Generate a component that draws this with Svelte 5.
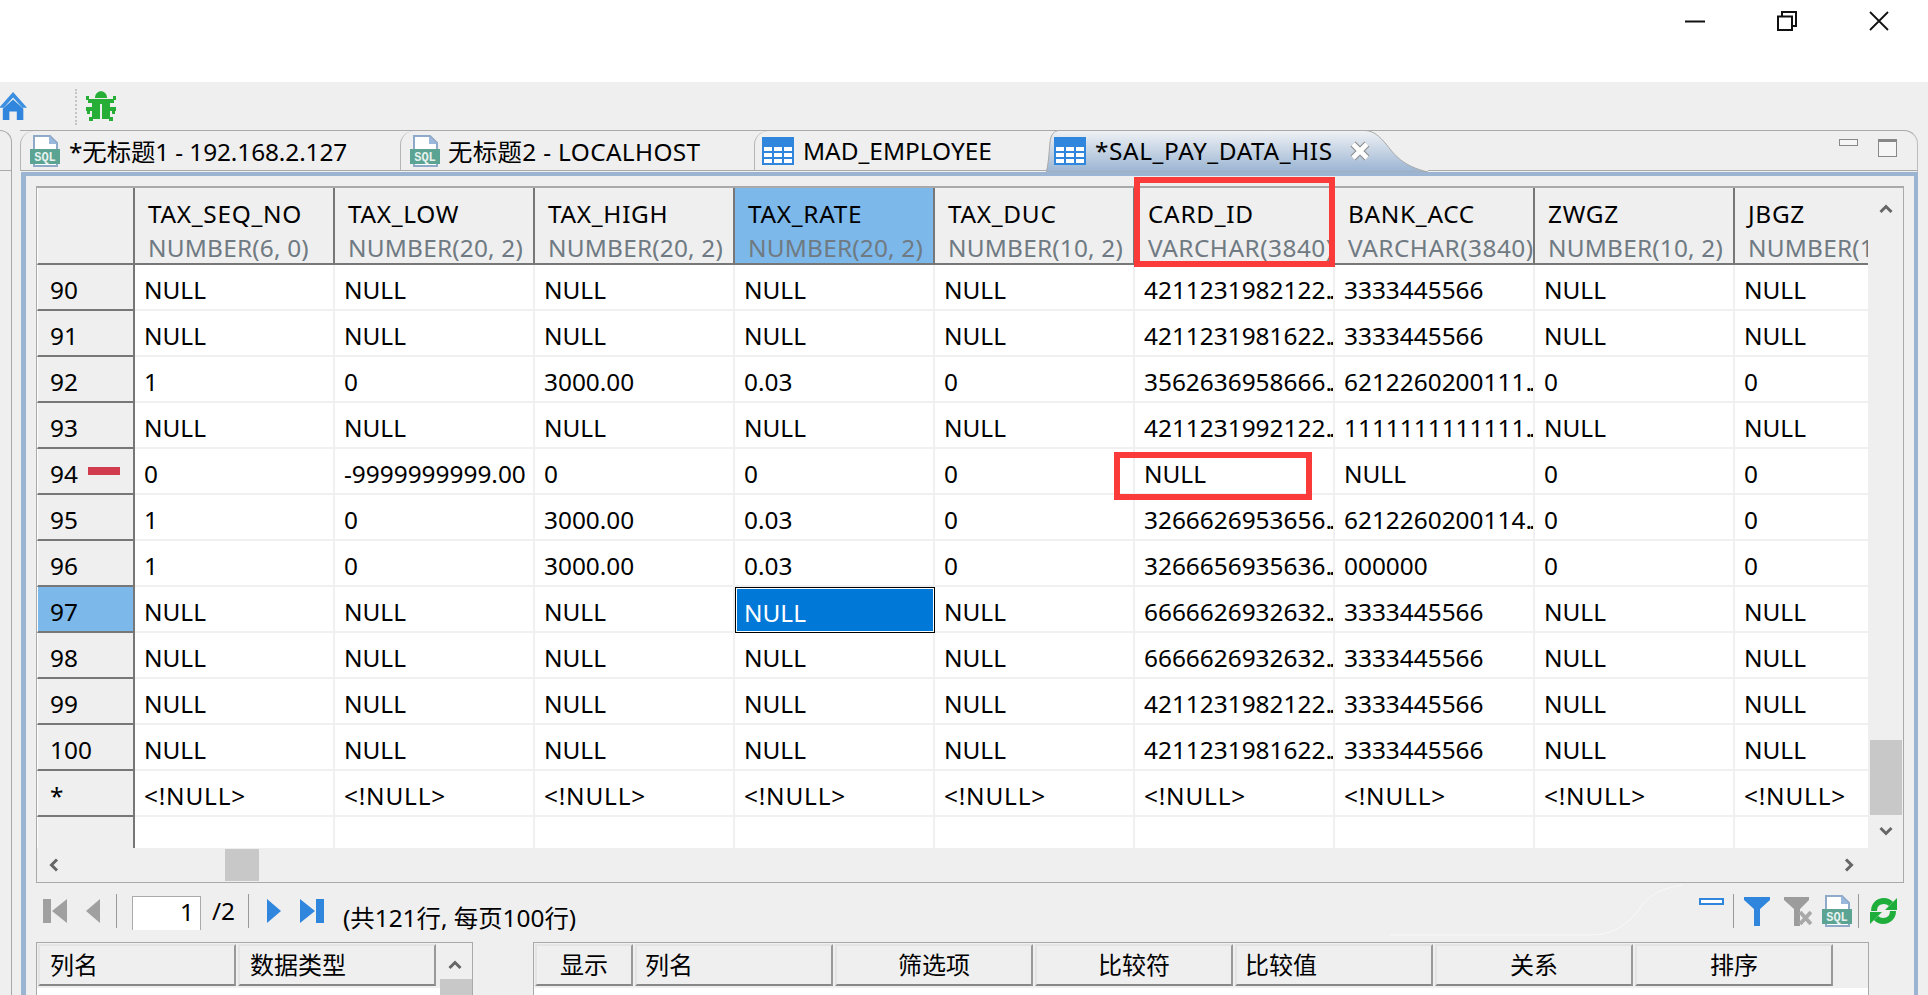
<script>
  const cols = [
    ['TAX_SEQ_NO', 'NUMBER(6, 0)'], ['TAX_LOW', 'NUMBER(20, 2)'], ['TAX_HIGH', 'NUMBER(20, 2)'],
    ['TAX_RATE', 'NUMBER(20, 2)'], ['TAX_DUC', 'NUMBER(10, 2)'], ['CARD_ID', 'VARCHAR(3840)'],
    ['BANK_ACC', 'VARCHAR(3840)'], ['ZWGZ', 'NUMBER(10, 2)'], ['JBGZ', 'NUMBER(10, 2)']
  ];
  const n = (c, b) => ['NULL', 'NULL', 'NULL', 'NULL', 'NULL', c, b, 'NULL', 'NULL'];
  const q = '3333445566';
  const rows = [
    ['90', n('4211231982122..', q)],
    ['91', n('4211231981622..', q)],
    ['92', ['1', '0', '3000.00', '0.03', '0', '3562636958666..', '6212260200111..', '0', '0']],
    ['93', n('4211231992122..', '1111111111111..')],
    ['94', ['0', '-9999999999.00', '0', '0', '0', 'NULL', 'NULL', '0', '0']],
    ['95', ['1', '0', '3000.00', '0.03', '0', '3266626953656..', '6212260200114..', '0', '0']],
    ['96', ['1', '0', '3000.00', '0.03', '0', '3266656935636..', '000000', '0', '0']],
    ['97', n('6666626932632..', q)],
    ['98', n('6666626932632..', q)],
    ['99', n('4211231982122..', q)],
    ['100', n('4211231981622..', q)],
    ['*', Array(9).fill('<!NULL>')],
    ['', Array(9).fill('')]
  ];
</script>

{#snippet sqlIcon()}
  <svg class="ic30" viewBox="0 0 30 32">
    <path d="M4 1H20L27 8V31H4Z" fill="#fff" stroke="#8fa9c9" stroke-width="2"/>
    <path d="M19 1L27 9H19Z" fill="#9ab7dc"/>
    <rect x="0" y="14" width="30" height="15" fill="#5ba392"/>
    <text x="15" y="26" text-anchor="middle" class="sqltxt">SQL</text>
  </svg>
{/snippet}

{#snippet tableIcon()}
  <svg class="ic32" viewBox="0 0 32 28">
    <rect width="32" height="28" fill="#2f86dc"/>
    <g fill="#fff">
      {#each [10, 16, 22] as y}
        {#each [2, 12, 22] as x}
          <rect {x} {y} width="8" height="4"/>
        {/each}
      {/each}
    </g>
  </svg>
{/snippet}

<div class="app">
  <header class="title">
    <svg class="wc" viewBox="0 0 20 20"><path d="M0 10.5H20" stroke="#111" stroke-width="2"/></svg>
    <svg class="wc" viewBox="0 0 20 20"><path d="M1 5.5H15V19H1ZM5 5V1H19V15H15" fill="none" stroke="#111" stroke-width="2"/></svg>
    <svg class="wc" viewBox="0 0 20 20"><path d="M1 1L19 19M19 1L1 19" stroke="#111" stroke-width="1.8"/></svg>
  </header>

  <div class="toolbar">
    <svg class="home" viewBox="0 0 30 30">
      <path d="M14 0L29 17H24L14 6L4 17H-1Z" fill="#3a8fe0"/>
      <path d="M3 18L14 8L25 18V30H18V21H10V30H3Z" fill="#2f86dc"/>
    </svg>
    <span class="dotsep"></span>
    <svg class="bug" viewBox="0 0 30 32">
      <g fill="#27ae36">
        <path d="M9 8C9 -1 21 -1 21 8Z"/>
        <path d="M6 9H14V29H6ZM16 9H24V29H16Z"/>
        <path d="M6 9H24V14H6Z"/>
        <path d="M0 6H3V9H7V13H2V10H0ZM30 6H27V9H23V13H28V10H30ZM0 17H7V21H4V24H1V21H0ZM30 17H23V21H26V24H29V21H30ZM7 24V27H3V31H7V29H10V24ZM23 24V27H27V31H23V29H20V24Z"/>
      </g>
    </svg>
  </div>

  <div class="work">
    <div class="stub"></div>
    <section class="editor">
      <div class="tabs">
        <div class="tab t1">{@render sqlIcon()}<span class="ls1">*无标题1 - 192.168.2.127</span></div>
        <div class="tab t2">{@render sqlIcon()}<span class="ls4">无标题2 - LOCALHOST</span></div>
        <div class="tab t3">{@render tableIcon()}<span>MAD_EMPLOYEE</span></div>
        <div class="tab t4">
          <svg class="tabshape" viewBox="0 0 382 42" preserveAspectRatio="none">
            <defs>
              <linearGradient id="tabgrad" x1="0" y1="0" x2="0" y2="1">
                <stop offset="0" stop-color="#f0f2f5"/>
                <stop offset="1" stop-color="#9ab4d2"/>
              </linearGradient>
            </defs>
            <path d="M0 42C2 38 3 24 4 12C5 4 8 1 13 0.5H319C328 1 333 6 340 14C348 24 356 36 382 42Z" fill="url(#tabgrad)" stroke="#a9a9a9"/>
          </svg>
          {@render tableIcon()}<span class="lbl">*SAL_PAY_DATA_HIS</span>
          <svg class="x" viewBox="0 0 20 20"><path d="M3 3L17 17M17 3L3 17" stroke="#8f8f8f" stroke-width="7"/><path d="M3 3L17 17M17 3L3 17" stroke="#fff" stroke-width="4.6"/></svg>
        </div>
        <div class="winbtns">
          <span class="pmin"></span>
          <span class="pmax"></span>
        </div>
      </div>

      <div class="body">
        <div class="grid">
          <div class="sheet">
            <div class="row head">
              <div class="rh corner"></div>
              {#each cols as c, i}
                <div class="hc" class:sel={i === 3}>
                  <div class="cn">{c[0]}</div>
                  <div class="ct" class:wide={c[1].startsWith('VARCHAR')}>{c[1]}</div>
                </div>
              {/each}
            </div>
            {#each rows as r, ri}
              <div class="row" class:tail={ri === rows.length - 1}>
                <div class="rh" class:sel={r[0] === '97'}>
                  <span>{r[0]}</span>
                  {#if r[0] === '94'}<i class="del"></i>{/if}
                </div>
                {#each r[1] as v, i}
                  <div class="c" class:cur={r[0] === '97' && i === 3} class:nn={v === '<!NULL>'}>
                    {#if v.endsWith('..')}<span>{v.slice(0, -2)}<span class="dots">..</span></span>{:else}{v}{/if}
                  </div>
                {/each}
              </div>
            {/each}
          </div>
          <div class="vbar">
            <svg class="arr" viewBox="0 0 14 10"><path d="M1.5 8L7 2.5L12.5 8" fill="none" stroke="#666" stroke-width="3"/></svg>
            <div class="vtrack"><div class="vthumb"></div></div>
            <svg class="arr" viewBox="0 0 14 10"><path d="M1.5 2L7 7.5L12.5 2" fill="none" stroke="#666" stroke-width="3"/></svg>
          </div>
          <div class="hbar">
            <svg class="arrh" viewBox="0 0 10 14"><path d="M8 1.5L2.5 7L8 12.5" fill="none" stroke="#666" stroke-width="3"/></svg>
            <div class="hthumb"></div>
            <svg class="arrh end" viewBox="0 0 10 14"><path d="M2 1.5L7.5 7L2 12.5" fill="none" stroke="#666" stroke-width="3"/></svg>
          </div>
        </div>

        <div class="pager">
          <svg class="pg first" viewBox="0 0 24 24"><path d="M0 0H8V24H0ZM24 0V24L9 12Z" fill="#a0a0a0"/></svg>
          <svg class="pg prev" viewBox="0 0 14 24"><path d="M14 0V24L0 12Z" fill="#a0a0a0"/></svg>
          <span class="vsep s1"></span>
          <div class="pinput">1</div>
          <span class="ptotal">/2</span>
          <span class="vsep s2"></span>
          <svg class="pg next" viewBox="0 0 14 24"><path d="M0 0V24L14 12Z" fill="#2f86dc"/></svg>
          <svg class="pg plast" viewBox="0 0 24 24"><path d="M0 0L15 12L0 24ZM16 0H24V24H16Z" fill="#2f86dc"/></svg>
          <span class="pinfo">(共121行, 每页100行)</span>
          <div class="ptools">
            <span class="restore"></span>
            <span class="vsep s3"></span>
            <svg class="funnel" viewBox="0 0 26 29"><path d="M0 0H26V3L16 12V29H10V12L0 3Z" fill="#2f86dc"/></svg>
            <svg class="funnel2" viewBox="0 0 28 29"><path d="M0 0H25V3L16 12V29H10V12L0 3Z" fill="#9c9c9c"/><path d="M16 15L27 27M27 15L16 27" stroke="#a9a9a9" stroke-width="4"/></svg>
            {@render sqlIcon()}
            <span class="vsep s4"></span>
            <svg class="refresh" viewBox="0 0 27 28">
              <g fill="none" stroke="#1fae3c" stroke-width="6">
                <path d="M4 14C4 8 8 4 14 4C17 4 19 5 21 7"/>
                <path d="M23 14C23 20 19 24 13 24C10 24 8 23 6 21"/>
              </g>
              <path d="M27 1V13H15Z" fill="#1fae3c"/>
              <path d="M0 27V15H12Z" fill="#1fae3c"/>
            </svg>
          </div>
        </div>

        <div class="lower">
          <div class="ltable">
            <div class="lhead">
              <div class="lh w198">列名</div>
              <div class="lh w198">数据类型</div>
              <div class="lscroll">
                <svg class="arr" viewBox="0 0 14 10"><path d="M1.5 8L7 2.5L12.5 8" fill="none" stroke="#666" stroke-width="3"/></svg>
                <div class="lthumb"></div>
              </div>
            </div>
          </div>
          <div class="rtable">
            <div class="lhead">
              <div class="lh w98 mid">显示</div>
              <div class="lh w198 lft">列名</div>
              <div class="lh w198 mid">筛选项</div>
              <div class="lh w198 mid">比较符</div>
              <div class="lh w198 lft">比较值</div>
              <div class="lh w198 mid">关系</div>
              <div class="lh w198 mid">排序</div>
            </div>
          </div>
        </div>
      </div>
    </section>
  </div>

  <svg class="curve" viewBox="0 0 400 60">
    <path d="M100 51H300C320 51 330 44 340 36C352 26 352 8 392 1" fill="none" stroke="#f9f9f9" stroke-width="1"/>
  </svg>
  <div class="mark m1"></div>
  <div class="mark m2"></div>
</div>

<style>
  :global(body) { margin: 0; background: #fff; }
  .app {
    position: relative;
    width: 1928px;
    height: 995px;
    overflow: hidden;
    background: #efefef;
    color: #000;
    font-family: "Noto Sans", "Noto Sans CJK SC", sans-serif;
    font-size: 24.4px;
  }
  svg { display: block; flex: none; }
  .title {
    height: 82px;
    background: #fff;
    display: flex;
    justify-content: flex-end;
    align-items: flex-start;
    gap: 72px;
    padding: 11px 39px 0 0;
    box-sizing: border-box;
  }
  .wc { width: 20px; height: 20px; }
  .toolbar {
    height: 48px;
    display: flex;
    align-items: center;
    box-sizing: border-box;
  }
  .home { width: 28px; height: 30px; }
  .dotsep { width: 0; height: 36px; border-left: 2px dotted #c4c4c4; margin: 1px 0 0 47px; }
  .bug { width: 30px; height: 32px; margin: 0 0 0 9px; }

  .work { display: flex; height: 865px; }
  .stub {
    width: 12px;
    height: 100%;
    box-sizing: border-box;
    border-top: 1px solid #a9a9a9;
    border-right: 1px solid #a9a9a9;
    border-top-right-radius: 14px;
    flex: none;
    position: relative;
  }
  .stub::after {
    content: "";
    position: absolute;
    left: 0;
    right: 0;
    top: 39px;
    height: 1px;
    background: #a9a9a9;
  }
  .editor { margin-left: 8px; width: 1898px; flex: none; }
  .tabs {
    height: 42px;
    display: flex;
    box-sizing: border-box;
    border-top: 1px solid #a9a9a9;
    border-right: 1px solid #bbb;
    border-top-right-radius: 14px;
    position: relative;
  }
  .tab {
    height: 40px;
    display: flex;
    align-items: center;
    box-sizing: border-box;
    border-left: 1px solid #b5b5b5;
    border-bottom: 1px solid #a9a9a9;
    border-top-left-radius: 14px;
    position: relative;
    flex: none;
    white-space: nowrap;
  }
  .t1 { width: 380px; padding-left: 9px; gap: 9px; }
  .t2 { width: 354px; padding-left: 9px; gap: 8px; }
  .t3 { width: 292px; padding-left: 7px; gap: 9px; }
  .t4 { width: 382px; padding-left: 8px; gap: 9px; border: 0; height: 41px; margin-top: -1px; }
  .ls1 { letter-spacing: -0.1px; }
  .ls4 { letter-spacing: 0.35px; }
  .lbl { letter-spacing: 0.6px; }
  .tabshape { position: absolute; left: 0; top: 0; width: 382px; height: 42px; }
  .t4 .ic32, .t4 .lbl, .t4 .x { position: relative; }
  .x { width: 20px; height: 20px; margin-left: 8px; }
  .ic30 { width: 30px; height: 32px; }
  .ic32 { width: 32px; height: 28px; }
  .sqltxt { font: 700 12px "Liberation Mono", monospace; fill: #e6f2ee; }
  .winbtns {
    flex: 1;
    height: 40px;
    box-sizing: border-box;
    border-bottom: 1px solid #a9a9a9;
    display: flex;
    justify-content: flex-end;
    align-items: flex-start;
    gap: 20px;
    padding: 8px 20px 0 0;
  }
  .pmin { width: 19px; height: 7px; box-sizing: border-box; border: 1px solid #888; background: #f6f6f6; }
  .pmax { width: 19px; height: 18px; box-sizing: border-box; border: 1px solid #888; border-top-width: 3px; background: #f6f6f6; }

  .body {
    height: 823px;
    margin-left: 1px;
    box-sizing: border-box;
    border: solid #9ab4d2;
    border-width: 4px 4px 0 5px;
    padding: 10px 10px 0 10px;
  }
  .grid {
    width: 1868px;
    height: 697px;
    box-sizing: border-box;
    border: 1px solid #a9a9a9;
    border-top: 2px solid #a9a9a9;
    display: grid;
    grid-template-columns: 1831px 35px;
    grid-template-rows: 660px 34px;
  }
  .sheet { overflow: hidden; background: #fff; }
  .row { display: flex; height: 46px; width: 1900px; }
  .row.tail { height: 31px; }
  .row.head { height: 77px; background: #efefef; }
  .rh {
    width: 98px;
    flex: none;
    box-sizing: border-box;
    background: #efefef;
    border-right: 2px solid #777;
    border-bottom: 2px solid #777;
    border-left: 1px solid #fff;
    padding: 4px 0 0 12px;
    display: flex;
    align-items: center;
    gap: 10px;
    height: 100%;
  }
  .tail .rh { border-bottom: 0; }
  .rh.sel { background: #7db8ea; }
  .del { width: 32px; height: 8px; background: #d03c4e; margin-top: -4px; }
  .hc {
    width: 200px;
    flex: none;
    box-sizing: border-box;
    border-right: 2px solid #777;
    border-bottom: 2px solid #777;
    padding: 9px 0 0 13px;
    overflow: hidden;
    white-space: nowrap;
    line-height: 34px;
  }
  .hc.sel { background: #7db8ea; }
  .corner { border-bottom: 2px solid #777; }
  .cn { letter-spacing: 0.7px; }
  .ct { color: #6f7a82; letter-spacing: 0.2px; }
  .ct.wide { letter-spacing: 0.5px; }
  .c {
    width: 200px;
    flex: none;
    box-sizing: border-box;
    border-right: 2px solid #f0f0f0;
    border-bottom: 2px solid #f0f0f0;
    padding: 5px 0 0 9px;
    display: flex;
    align-items: center;
    white-space: nowrap;
    overflow: hidden;
    height: 100%;
  }
  .c.nn { letter-spacing: 0.8px; }
  .dots { letter-spacing: -3px; }
  .tail .c { border-bottom: 0; }
  .c.cur {
    background: #0078d7;
    color: #fff;
    border: 1px solid #000;
    outline: 1px solid #fff;
    outline-offset: -2px;
    padding-left: 8px;
  }
  .vbar {
    display: flex;
    flex-direction: column;
    align-items: center;
    justify-content: space-between;
    padding: 16px 0 12px;
    box-sizing: border-box;
  }
  .vtrack { flex: 1; width: 32px; position: relative; }
  .vthumb { position: absolute; left: 0; right: 0; bottom: 11px; height: 75px; background: #c8c8c8; }
  .arr { width: 14px; height: 10px; }
  .arrh { width: 10px; height: 14px; margin-left: 12px; }
  .arrh.end { margin-left: auto; margin-right: 12px; }
  .hbar {
    grid-column: 1 / 3;
    display: flex;
    align-items: center;
    padding-right: 37px;
    position: relative;
  }
  .hthumb { width: 34px; height: 32px; margin-left: 166px; background: #c8c8c8; }

  .pager { height: 59px; display: flex; align-items: flex-start; position: relative; }
  .pg { height: 24px; margin-top: 16px; }
  .first { width: 24px; margin-left: 7px; }
  .prev { width: 14px; margin-left: 19px; }
  .vsep { width: 1px; height: 34px; background: #999; margin-top: 11px; flex: none; }
  .s1 { margin-left: 16px; }
  .pinput {
    width: 69px;
    height: 34px;
    margin: 13px 0 0 15px;
    box-sizing: border-box;
    background: #fff;
    border: solid #aaa;
    border-width: 1px 1px 0 1px;
    text-align: right;
    padding-right: 6px;
    line-height: 30px;
  }
  .ptotal { margin: 13px 0 0 11px; line-height: 30px; width: 36px; flex: none; }
  .s2 { margin-left: 0; }
  .next { width: 14px; margin-left: 18px; }
  .plast { width: 24px; margin-left: 19px; }
  .pinfo { margin: 17px 0 0 19px; line-height: 36px; }
  .ptools { margin-left: auto; display: flex; align-items: flex-start; padding-right: 7px; }
  .restore { width: 25px; height: 7px; box-sizing: border-box; border: 2px solid #2f86dc; background: #fff; margin: 15px 0 0 0; }
  .s3 { margin-left: 9px; }
  .funnel { width: 26px; height: 29px; margin: 14px 0 0 10px; }
  .funnel2 { width: 28px; height: 29px; margin: 14px 0 0 14px; }
  .ptools > :global(.ic30) { margin: 12px 0 0 10px; }
  .s4 { margin-left: 6px; }
  .refresh { width: 27px; height: 28px; margin: 14px 0 0 11px; }

  .lower { display: flex; height: 53px; align-items: flex-start; gap: 60px; }
  .ltable, .rtable {
    box-sizing: border-box;
    height: 60px;
    border: 1px solid #a9a9a9;
    background: #fff;
    flex: none;
  }
  .ltable { width: 437px; }
  .rtable { width: 1336px; background: #fff; }
  .lhead { display: flex; height: 45px; background: #efefef; padding: 1px 0 0 1px; box-sizing: border-box; }
  .lh {
    box-sizing: border-box;
    height: 42px;
    margin-right: 2px;
    flex: none;
    border: 2px solid #e4e4e4;
    border-right-color: #999;
    border-bottom-color: #888;
    padding-left: 10px;
    line-height: 37px;
    font-size: 24px;
  }
  .w198 { width: 198px; }
  .w98 { width: 98px; }
  .mid { text-align: center; padding-left: 0; }
  .lft { padding-left: 8px; }
  .lscroll { width: 35px; position: relative; display: flex; justify-content: center; padding-top: 16px; box-sizing: border-box; }
  .lthumb { position: absolute; left: 2px; top: 35px; width: 32px; height: 30px; background: #c8c8c8; }

  .curve { position: absolute; left: 1290px; top: 884px; width: 400px; height: 60px; }
  .mark { position: absolute; box-sizing: border-box; border: 6px solid #fb3a3a; }
  .m1 { left: 1134px; top: 177px; width: 201px; height: 90px; }
  .m2 { left: 1114px; top: 452px; width: 198px; height: 48px; }
</style>
